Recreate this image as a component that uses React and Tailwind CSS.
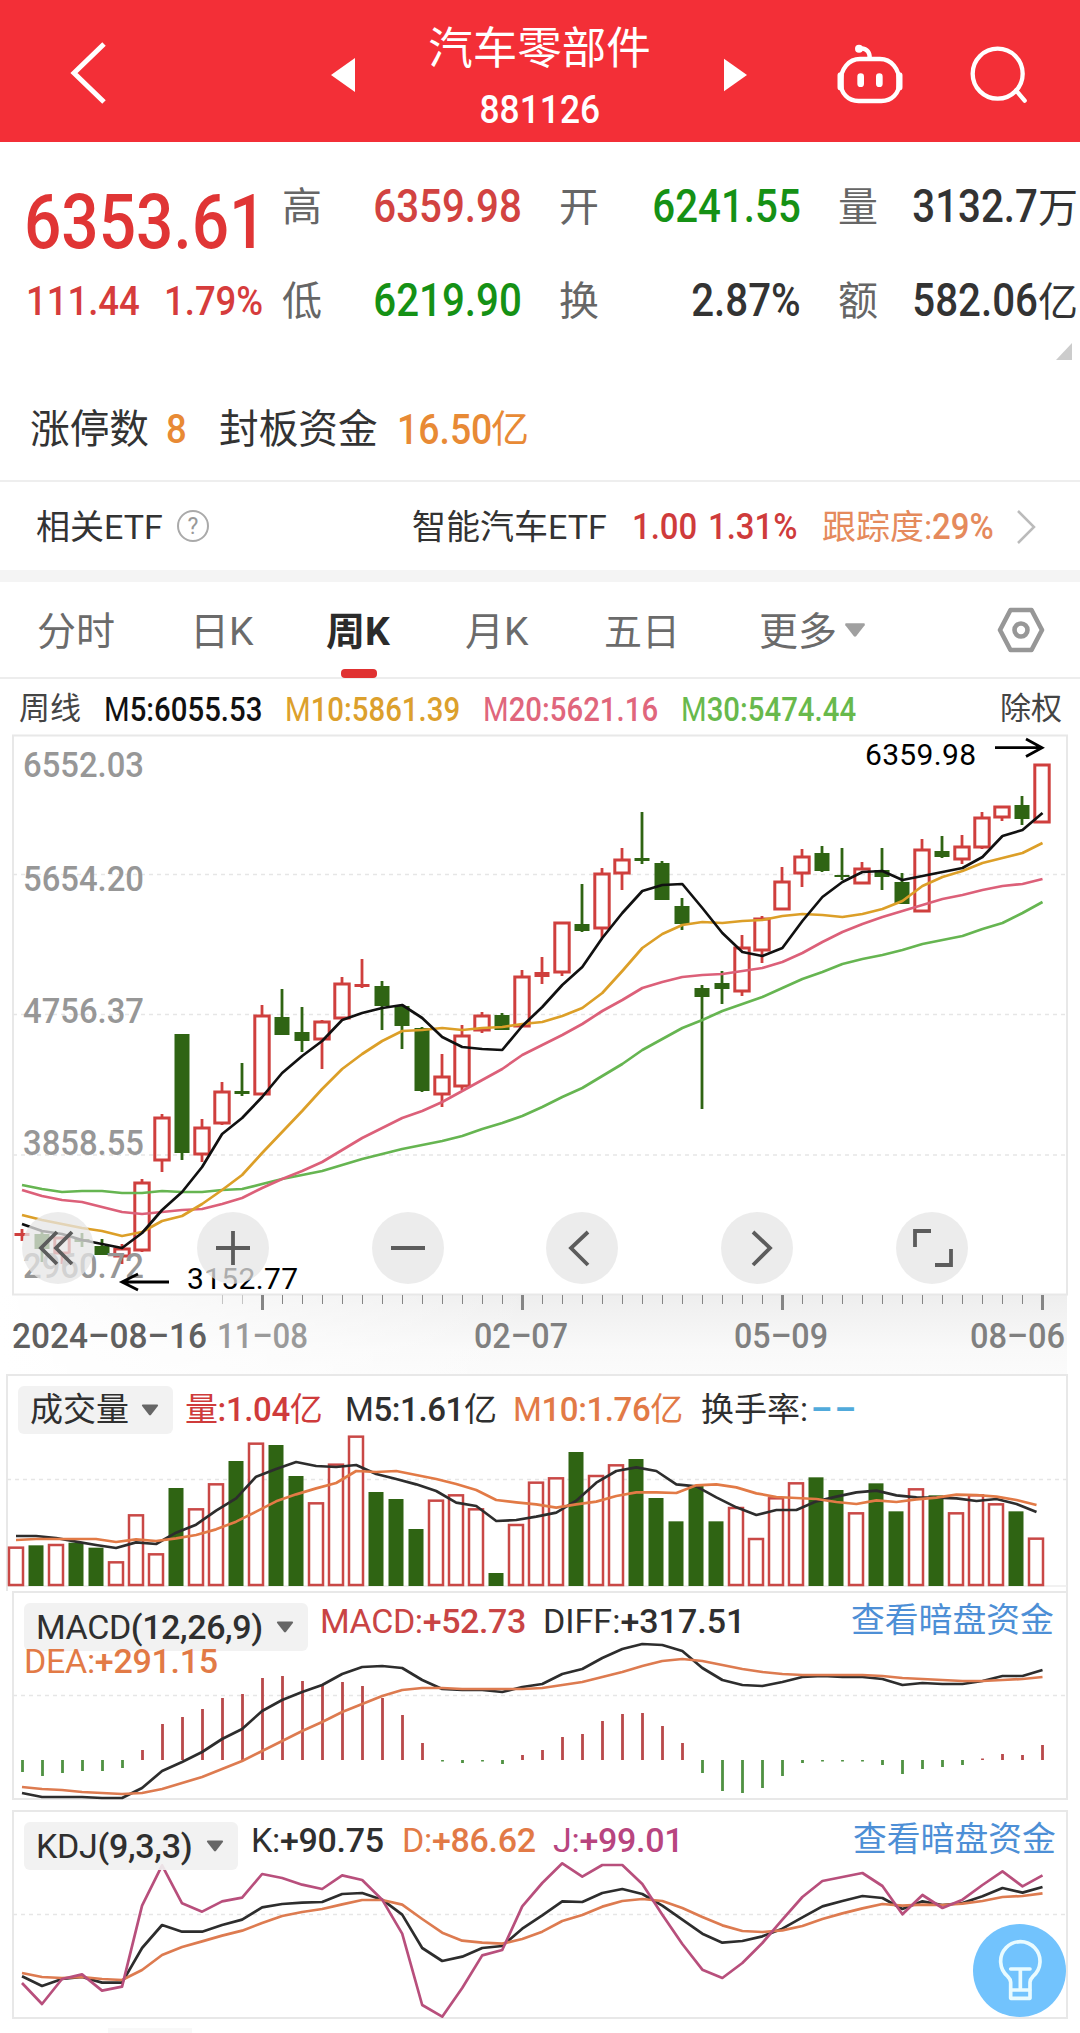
const RED = '#cf3f3d';
const GREEN = '#2f6413';

// one entry per week: [direction, body top, body bottom, wick top, wick bottom]
const candles = [
  ['r', 1233, 1236, 1229, 1241], ['g', 1234, 1249, 1232, 1262], ['r', 1238, 1253, 1238, 1264], ['g', 1239, 1242, 1233, 1247],
  ['g', 1246, 1255, 1239, 1255], ['r', 1249, 1256, 1244, 1264], ['r', 1183, 1250, 1179, 1252], ['r', 1118, 1160, 1114, 1172],
  ['g', 1034, 1153, 1034, 1160], ['r', 1128, 1154, 1119, 1162], ['r', 1092, 1123, 1082, 1125], ['g', 1091, 1094, 1063, 1096],
  ['r', 1016, 1094, 1005, 1094], ['g', 1017, 1035, 989, 1035], ['g', 1032, 1041, 1007, 1052], ['r', 1022, 1039, 1020, 1069],
  ['r', 984, 1018, 977, 1018], ['r', 984, 987, 959, 988], ['g', 986, 1006, 981, 1030], ['g', 1006, 1026, 1006, 1049],
  ['g', 1028, 1091, 1027, 1092], ['r', 1077, 1094, 1054, 1107], ['r', 1036, 1086, 1025, 1090], ['r', 1016, 1030, 1012, 1033],
  ['g', 1015, 1030, 1013, 1030], ['r', 977, 1026, 970, 1026], ['r', 972, 977, 957, 984], ['r', 923, 972, 923, 976],
  ['g', 924, 931, 884, 932], ['r', 874, 928, 868, 938], ['r', 860, 873, 848, 890], ['g', 858, 861, 812, 864],
  ['g', 863, 900, 861, 900], ['g', 906, 924, 898, 930], ['g', 988, 997, 985, 1109], ['g', 983, 989, 971, 1004],
  ['r', 948, 991, 935, 996], ['r', 919, 950, 916, 963], ['r', 882, 909, 867, 909], ['r', 857, 873, 849, 887],
  ['g', 853, 871, 846, 872], ['g', 875, 877, 848, 880], ['r', 869, 883, 862, 883], ['g', 870, 877, 848, 890],
  ['g', 882, 904, 873, 904], ['r', 850, 911, 839, 911], ['g', 851, 857, 836, 858], ['r', 847, 859, 835, 864],
  ['r', 818, 847, 812, 849], ['r', 807, 817, 807, 821], ['g', 805, 819, 796, 825], ['r', 765, 822, 765, 822],
];

const priceLines = [
  {
    color: '#66b551',
    y: [1185, 1189, 1192, 1191, 1191, 1193, 1193, 1191, 1192, 1192, 1190, 1189, 1184, 1179, 1175, 1171, 1165, 1159, 1154, 1149, 1145, 1141, 1136, 1129, 1123, 1116, 1107, 1097, 1088, 1076, 1064, 1050, 1039, 1028, 1020, 1011, 1004, 997, 988, 979, 972, 964, 959, 955, 950, 944, 940, 936, 929, 923, 913, 902],
  },
  {
    color: '#dc6079',
    y: [1190, 1196, 1200, 1202, 1207, 1212, 1214, 1212, 1210, 1209, 1204, 1198, 1188, 1179, 1171, 1162, 1150, 1138, 1128, 1118, 1111, 1102, 1091, 1080, 1069, 1055, 1045, 1035, 1024, 1011, 1000, 988, 982, 977, 975, 974, 971, 968, 962, 953, 942, 932, 924, 917, 911, 905, 899, 895, 890, 886, 884, 879],
  },
  {
    color: '#dc9f28',
    y: [1215, 1220, 1224, 1228, 1231, 1236, 1232, 1221, 1216, 1204, 1190, 1175, 1153, 1132, 1111, 1089, 1069, 1054, 1041, 1031, 1030, 1028, 1030, 1028, 1027, 1024, 1022, 1016, 1008, 993, 971, 948, 934, 925, 922, 923, 921, 920, 916, 914, 915, 917, 914, 909, 901, 886, 877, 871, 863, 858, 853, 843],
  },
  {
    color: '#111111',
    y: [1224, 1231, 1234, 1240, 1244, 1248, 1233, 1210, 1192, 1167, 1134, 1118, 1097, 1073, 1056, 1041, 1020, 1013, 1008, 1005, 1018, 1037, 1047, 1049, 1050, 1026, 1007, 985, 967, 938, 913, 891, 885, 884, 908, 933, 952, 956, 948, 921, 897, 882, 872, 871, 880, 876, 872, 868, 857, 836, 830, 813],
  },
];

const volumeDirs = 'rgrggrrrgrrgrggrrrgggrrrgrrrgrrgggggrrrrggrggrgrrrgr';
const volumeTops = [563, 556, 555, 548, 563, 607, 466, 583, 384, 448, 373, 303, 251, 255, 348, 430, 314, 230, 396, 417, 507, 422, 406, 448, 639, 495, 368, 355, 276, 348, 316, 297, 414, 484, 378, 484, 444, 537, 415, 370, 352, 390, 460, 370, 454, 388, 406, 460, 406, 433, 454, 536];
const volumeM5 = [528, 528, 534, 545, 555, 564, 547, 552, 518, 494, 452, 415, 350, 327, 306, 318, 321, 315, 342, 357, 373, 393, 428, 438, 483, 480, 470, 458, 422, 368, 333, 322, 333, 373, 379, 412, 442, 465, 450, 450, 424, 410, 397, 392, 406, 412, 413, 415, 423, 417, 432, 456];
const volumeM10 = [540, 537, 537, 537, 537, 546, 538, 543, 535, 525, 508, 485, 455, 424, 403, 385, 369, 333, 336, 333, 345, 357, 372, 390, 420, 427, 433, 443, 433, 425, 408, 397, 397, 399, 376, 373, 382, 400, 411, 414, 417, 426, 432, 421, 426, 418, 413, 404, 405, 410, 420, 435];

const macdEnds = [1772, 1776, 1773, 1771, 1771, 1768, 1750, 1724, 1717, 1709, 1698, 1694, 1678, 1676, 1681, 1685, 1682, 1686, 1698, 1715, 1743, 1761.5, 1763, 1761.5, 1764, 1755, 1750, 1737, 1734, 1721, 1714, 1713, 1726, 1743, 1773, 1791, 1793, 1788, 1776, 1763, 1761.5, 1761.5, 1761.5, 1765, 1774, 1769, 1767, 1765, 1758.5, 1754, 1755, 1745];
const diff = [1793, 1797, 1797, 1797, 1798, 1798, 1788, 1771, 1762, 1752, 1739, 1729, 1711, 1700, 1692, 1685, 1674, 1667, 1666, 1668, 1680, 1689, 1690, 1690, 1692, 1687, 1684, 1674, 1669, 1658, 1649, 1644, 1645, 1651, 1668, 1680, 1685, 1686, 1682, 1677, 1676, 1677, 1677, 1679, 1685, 1683, 1684, 1684, 1681, 1676, 1676, 1670];
const dea = [1787, 1789, 1790, 1792, 1793, 1794, 1793, 1789, 1783, 1777, 1769, 1761, 1751, 1741, 1731, 1722, 1712, 1704, 1696, 1690, 1688, 1688, 1689, 1689, 1689, 1689, 1688, 1685, 1682, 1677, 1672, 1666, 1661, 1659, 1661, 1665, 1669, 1672, 1674, 1675, 1675, 1675, 1675, 1676, 1678, 1679, 1680, 1681, 1681, 1680, 1679, 1677];

const kLine = [850, 879, 858, 852, 869, 869, 765, 696, 716, 716, 696, 680, 643, 633, 629, 627, 603, 600, 620, 665, 765, 804, 791, 765, 759, 707, 667, 625, 627, 600, 588, 603, 638, 680, 722, 749, 744, 730, 707, 673, 640, 624, 609, 615, 648, 625, 636, 630, 610, 585, 599, 582];
const dLine = [840, 852, 855, 852, 858, 861, 831, 786, 762, 745, 728, 713, 690, 669, 657, 648, 634, 621, 621, 635, 678, 719, 743, 749, 752, 738, 716, 684, 666, 641, 624, 618, 624, 645, 672, 697, 714, 717, 712, 699, 678, 661, 646, 633, 638, 635, 636, 632, 624, 612, 609, 601];
const jLine = [870, 933, 858, 844, 893, 881, 638, 517, 631, 656, 625, 614, 543, 555, 575, 588, 547, 561, 620, 722, 936, 971, 885, 787, 771, 640, 570, 511, 551, 516, 516, 573, 665, 753, 830, 855, 810, 750, 680, 612, 564, 552, 540, 579, 664, 606, 645, 620, 576, 535, 580, 547];

const thirds = (base) => (v) => base + v / 3;

function Line({ ys, color, x0 = 22 }) {
  const points = ys.map((y, i) => `${x0 + i * 20.01},${y}`).join(' ');
  return <polyline points={points} fill="none" stroke={color} strokeWidth="2.7" strokeLinejoin="round" />;
}

function Dashed({ y, x1 = 13 }) {
  return <line x1={x1} x2="1067" y1={y} y2={y} stroke="#e6e6e6" strokeWidth="1.5" strokeDasharray="4 4" />;
}

function Down({ className }) {
  return (
    <svg className={className} viewBox="0 0 18 12">
      <path d="M1.5 0.5h15q1 0.6 0.4 1.6l-7 9q-0.9 0.8-1.8 0l-7-9q-0.6-1 0.4-1.6z" fill="currentColor" />
    </svg>
  );
}

// narrow figures, squeezed towards the left edge
function Num({ children, className = '' }) {
  return <span className={`inline-block origin-left scale-x-[0.89] font-medium ${className}`}>{children}</span>;
}

function Header() {
  return (
    <header className="flex h-[142px] w-full items-center bg-[#f32f37] text-white">
      <svg className="mt-[4px] ml-[66px] h-[80px] w-[46px]" viewBox="66 33 46 80" fill="none" stroke="#fff" strokeWidth="5">
        <path d="M104 44L74 73l30 29" />
      </svg>
      <svg className="mt-[7px] ml-[219px] h-[34px] w-[24px]" viewBox="0 0 24 34" fill="#fff">
        <path d="M24 0v34L0 17z" />
      </svg>
      <div className="flex h-full w-[369px] flex-col items-center pt-[17px]">
        <div className="text-[44.5px] leading-[64px]">汽车零部件</div>
        <div className="mt-[9px] scale-x-[0.93] text-[38px] leading-[40px] font-medium">881126</div>
      </div>
      <svg className="mt-[7px] h-[34px] w-[23px]" viewBox="0 0 24 34" fill="#fff">
        <path d="M0 0v34l24-17z" />
      </svg>
      <svg className="mt-[8px] ml-[73px] h-[90px] w-[220px]" viewBox="0 0 660 270" fill="none" stroke="#fff" strokeWidth="13" strokeLinecap="round">
        <path d="M149 85C150 68 142 56 124 55" />
        <circle cx="117" cy="56" r="12" fill="#fff" stroke="none" />
        <path d="M120 87h60c34 0 58 30 58 68 0 36-22 58-54 58h-68c-32 0-54-22-54-58 0-38 24-68 58-68z" />
        <path d="M62 136v36M238 136v36" strokeWidth="19" />
        <path d="M122 140v21M178 140v21" strokeWidth="20" />
        <circle cx="533" cy="131" r="75" />
        <path d="M588 181l26 31" />
      </svg>
    </header>
  );
}

function Quote({ label, value, unit, labelClass, valueClass }) {
  return (
    <>
      <span className={`shrink-0 text-[40px] text-[#666] ${labelClass}`}>{label}</span>
      <span className={`shrink-0 text-right text-[45.5px] font-medium ${valueClass}`}>
        <span className="inline-block origin-right scale-x-[0.885]">{value}</span>
        {unit && <span className="text-[40px] font-normal">{unit}</span>}
      </span>
    </>
  );
}

function Summary() {
  return (
    <section className="h-[428px] overflow-hidden">
      <div className="flex h-[94px] items-center pt-[37px] whitespace-nowrap">
        <span className="ml-[24px] w-[258px] shrink-0 pt-[28px] text-[76px] leading-none text-[#e03535]">
          <span className="inline-block origin-left scale-x-[0.865] font-medium">6353.61</span>
        </span>
        <Quote label="高" value="6359.98" labelClass="w-[40px]" valueClass="w-[200px] text-[#d24341]" />
        <Quote label="开" value="6241.55" labelClass="ml-[37px] w-[40px]" valueClass="w-[202px] text-[#159115]" />
        <Quote label="量" value="3132.7" unit="万" labelClass="ml-[37px] w-[40px]" valueClass="w-[200px] text-[#333]" />
      </div>
      <div className="flex h-[94px] items-center pt-[37px] whitespace-nowrap">
        <span className="ml-[26px] w-[138px] shrink-0 text-[41px] text-[#d63c3c]"><Num className="scale-x-[0.87]">111.44</Num></span>
        <span className="w-[118px] shrink-0 text-[41px] text-[#d63c3c]"><Num>1.79%</Num></span>
        <Quote label="低" value="6219.90" labelClass="w-[40px]" valueClass="w-[200px] text-[#159115]" />
        <Quote label="换" value="2.87%" labelClass="ml-[37px] w-[40px]" valueClass="w-[202px] text-[#333]" />
        <Quote label="额" value="582.06" unit="亿" labelClass="ml-[37px] w-[40px]" valueClass="w-[200px] text-[#333]" />
      </div>
      <div className="flex h-[30px] items-end justify-end pr-[8px]">
        <svg className="h-[17px] w-[16px]" viewBox="0 0 16 17">
          <path d="M16 0v17H0z" fill="#ccc" />
        </svg>
      </div>
      <div className="flex h-[122px] items-center border-b-2 border-[#eee] pt-[19px] text-[39.7px] whitespace-nowrap text-[#333]">
        <span className="ml-[30px] w-[136px]">涨停数</span>
        <span className="w-[53px] text-[41px] text-[#e88a35]"><Num>8</Num></span>
        <span className="w-[178px]">封板资金</span>
        <span className="w-[94px] text-[42px] text-[#e88a35]"><Num>16.50</Num></span>
        <span className="text-[38px] text-[#e88a35]">亿</span>
      </div>
      <div className="flex h-[88px] items-center pt-[2px] text-[34px] whitespace-nowrap text-[#333]">
        <span className="ml-[36px] w-[141px]">相关ETF</span>
        <span className="-mt-[2px] flex h-[32px] w-[32px] items-center justify-center rounded-full border-2 border-[#aaa] text-[23px] leading-none text-[#999]">?</span>
        <span className="ml-[203px] w-[220px]">智能汽车ETF</span>
        <span className="w-[76px] text-[37px] text-[#cf3b3b]"><Num>1.00</Num></span>
        <span className="w-[114px] text-[37px] text-[#cf3b3b]"><Num>1.31%</Num></span>
        <span className="w-[110px] text-[#e58a5c]">跟踪度:</span>
        <span className="w-[84px] text-[37px] text-[#e58a5c]"><Num>29%</Num></span>
        <svg className="h-[34px] w-[20px]" viewBox="0 0 20 34" fill="none" stroke="#bbb" strokeWidth="2.5">
          <path d="M2 1l16 16L2 33" />
        </svg>
      </div>
    </section>
  );
}

function Tabs() {
  return (
    <nav className="flex h-[97px] items-center border-b-2 border-[#ededed] pt-[5px] text-[39px] whitespace-nowrap text-[#6b6b6b]">
      <span className="ml-[37px] w-[153px]">分时</span>
      <span className="w-[136px]">日K</span>
      <span className="relative w-[139px] font-bold text-[#2b2b2b]">
        周K
        <i className="absolute top-[66px] left-[15px] h-[9px] w-[36px] rounded bg-[#e03131]" />
      </span>
      <span className="w-[139px]">月K</span>
      <span className="w-[155px] text-[38px]">五日</span>
      <span className="w-[85px]">更多</span>
      <Down className="-mt-[5px] h-[18px] w-[22px] text-[#a0a0a0]" />
      <svg className="-mt-[5px] ml-[131px] h-[46px] w-[48px]" viewBox="0 0 48 46" fill="none" stroke="#979797" strokeWidth="4.6" strokeLinejoin="round">
        <path d="M13.5 3h21L45 23 34.5 43h-21L3 23z" />
        <circle cx="24" cy="23" r="6.5" />
      </svg>
    </nav>
  );
}

function Legend() {
  return (
    <div className="flex h-[55px] items-center pt-[6px] text-[33px] whitespace-nowrap">
      <span className="ml-[19px] w-[85px] text-[31px] text-[#444]">周线</span>
      <span className="w-[181px] text-[#111]"><Num><span className="font-normal">M</span>5:6055.53</Num></span>
      <span className="w-[198px] text-[#dca02c]"><Num><span className="font-normal">M</span>10:5861.39</Num></span>
      <span className="w-[198px] text-[#e0667c]"><Num><span className="font-normal">M</span>20:5621.16</Num></span>
      <span className="w-[319px] text-[#68b94c]"><Num><span className="font-normal">M</span>30:5474.44</Num></span>
      <span className="text-[31px] text-[#444]">除权</span>
    </div>
  );
}

function Candle({ data, i }) {
  const [dir, top, bottom, high, low] = data;
  const x = 22 + i * 20;
  const color = dir === 'r' ? RED : GREEN;
  const flat = bottom - top < 6;
  return (
    <g fill={color}>
      <rect x={x - 1.4} y={high} width="2.8" height={Math.max(top - high, 0)} />
      <rect x={x - 1.4} y={bottom} width="2.8" height={Math.max(low - bottom, 0)} />
      {dir === 'g' || flat ? (
        <rect x={x - 7.5} y={top} width="15" height={bottom - top} />
      ) : (
        <rect x={x - 7.2} y={top} width="14.4" height={bottom - top} fill="none" stroke={color} strokeWidth="3" />
      )}
    </g>
  );
}

const roundIcons = [
  ['first', 'M35 20L19 36l16 16M50 20L34 36l16 16'],
  ['zoom in', 'M36 19v34M19 36h34'],
  ['zoom out', 'M19 36h34'],
  ['previous', 'M42 20L25 36l17 17'],
  ['next', 'M32 20l17 16-17 17'],
  ['full screen', 'M19 35V19h16M39 53h16V37'],
];

const axisPrices = [['6552.03', 777], ['5654.20', 891], ['4756.37', 1023], ['3858.55', 1155], ['2960.72', 1278]];
const axisDates = [['11–08', 218, '#9a9a9a', 91], ['02–07', 475, '#808080', 94], ['05–09', 735, '#808080', 94], ['08–06', 971, '#808080', 95]];

function PriceChart() {
  return (
    <div className="relative h-[640px]">
      <svg className="block h-[640px] w-full" viewBox="0 734 1080 640">
        <defs>
          <linearGradient id="axisX" x1="0" x2="1">
            <stop offset="0" stopColor="#fff" />
            <stop offset="0.5" stopColor="#fff" stopOpacity="0" />
          </linearGradient>
          <linearGradient id="axisY" x1="0" x2="0" y1="0" y2="1">
            <stop offset="0" stopColor="#eeeeee" />
            <stop offset="0.7" stopColor="#f9f9f9" />
            <stop offset="1" stopColor="#fbfbfb" />
          </linearGradient>
        </defs>
        <rect x="0" y="1295" width="1067" height="79" fill="url(#axisY)" />
        <rect x="0" y="1295" width="1067" height="79" fill="url(#axisX)" />
        <rect x="13" y="735.5" width="1054" height="559" fill="#fff" stroke="#e8e8e8" strokeWidth="2" />
        <Dashed y={874.5} />
        <Dashed y={1014.5} />
        <Dashed y={1155} />
        {candles.map((c, i) => (
          <Candle key={i} data={c} i={i} />
        ))}
        {priceLines.map((l) => (
          <Line key={l.color} ys={l.y} color={l.color} />
        ))}
        {axisPrices.map(([label, y]) => (
          <text key={label} x="23" y={y} textLength="121" lengthAdjust="spacingAndGlyphs" fontSize="35" fontWeight="500" fill="#979797">
            {label}
          </text>
        ))}
        <text x="865" y="765" textLength="111" fontSize="30" fill="#000">6359.98</text>
        <path d="M995 747.7h46M1026 739l16 8.7-16 8.7" fill="none" stroke="#000" strokeWidth="2.8" />
        <text x="187" y="1289" textLength="111" fontSize="30" fill="#000">3152.77</text>
        <path d="M169 1282h-46M138 1274l-16 8 16 8" fill="none" stroke="#000" strokeWidth="2.8" />
        {Array.from({ length: 42 }, (_, k) => k + 10).map((i) => {
          const major = (i - 12) % 13 === 0;
          return (
            <rect
              key={i}
              x={22.5 + i * 20 - (major ? 1.5 : 0.5)}
              y="1295"
              width={major ? 3 : 1}
              height={major ? 15 : 9}
              fill={i < 12 ? '#c4c4c4' : '#858585'}
            />
          );
        })}
        <text x="12" y="1348" textLength="195" lengthAdjust="spacingAndGlyphs" fontSize="35" fontWeight="500" fill="#606060">2024–08–16</text>
        {axisDates.map(([label, x, color, length]) => (
          <text key={label} x={x - 1} y="1348" textLength={length} lengthAdjust="spacingAndGlyphs" fontSize="35" fontWeight="500" fill={color}>
            {label}
          </text>
        ))}
      </svg>
      <div className="absolute top-[478px] left-[22px] flex gap-[102.8px]">
        {roundIcons.map(([name, d]) => (
          <button key={name} aria-label={name} className="h-[72px] w-[72px] shrink-0 rounded-full bg-[#e5e5e5]/75">
            <svg className="h-full w-full" viewBox="0 0 72 72" fill="none" stroke="#5c5c5c" strokeWidth="3.8">
              <path d={d} />
            </svg>
          </button>
        ))}
      </div>
    </div>
  );
}

function Pill({ children, className }) {
  return (
    <div className={`flex h-[48px] shrink-0 items-center justify-between rounded-md bg-[#f1f1f1]/90 text-[#2f2f2f] ${className}`}>
      {children}
      <Down className="h-[12px] w-[18px] text-[#666]" />
    </div>
  );
}

function VolumeChart() {
  const at = thirds(1360);
  return (
    <div className="relative h-[217px]">
      <svg className="block h-[217px] w-full" viewBox="0 1374 1080 217">
        <path d="M7 1591V1375H1067V1591" fill="none" stroke="#e8e8e8" strokeWidth="2" />
        <path d="M7 1586H1067" stroke="#ececec" strokeWidth="1.5" />
        <Dashed y={1479.5} x1={7} />
        {volumeTops.map((v, i) => {
          const x = 16 + i * 20;
          const top = at(v);
          return volumeDirs[i] === 'g' ? (
            <rect key={i} x={x - 7.5} y={top} width="15" height={1586 - top} fill={GREEN} />
          ) : (
            <rect key={i} x={x - 7} y={top} width="14" height={1585 - top} fill="#fff" stroke="#c94846" strokeWidth="2.5" />
          );
        })}
        <Line ys={volumeM5.map(at)} color="#2d2d2d" x0={16} />
        <Line ys={volumeM10.map(at)} color="#e27a46" x0={16} />
      </svg>
      <div className="absolute top-[11px] left-[18px] flex items-center text-[33px] tracking-[-0.4px] whitespace-nowrap">
        <Pill className="mr-[12px] w-[155px] pr-[14px] pl-[12px] tracking-normal">成交量</Pill>
        <span className="w-[160px] font-medium text-[#cf3b3b]">
          <span className="font-normal">量</span>:1.04<span className="font-normal">亿</span>
        </span>
        <span className="w-[168px] font-medium text-[#2f2f2f]">
          <span className="font-normal">M</span>5:1.61<span className="font-normal">亿</span>
        </span>
        <span className="w-[188px] font-medium text-[#e27a46]">
          <span className="font-normal">M</span>10:1.76<span className="font-normal">亿</span>
        </span>
        <span className="tracking-normal text-[#2f2f2f]">换手率:</span>
        <span className="ml-[3px] font-bold tracking-[3px] text-[#51aadb]">––</span>
      </div>
    </div>
  );
}

function MacdChart() {
  return (
    <div className="relative h-[209px]">
      <svg className="block h-[209px] w-full" viewBox="0 1591 1080 209">
        <rect x="13" y="1592" width="1054" height="207" fill="#fff" stroke="#e8e8e8" strokeWidth="2" />
        <Dashed y={1695.5} />
        {macdEnds.map((end, i) => (
          <rect
            key={i}
            x={22.5 + i * 20 - 1.4}
            y={Math.min(end, 1760)}
            width="2.8"
            height={Math.abs(end - 1760)}
            fill={end < 1760 ? '#b9494a' : '#4f9142'}
          />
        ))}
        <Line ys={diff} color="#2d2d2d" />
        <Line ys={dea} color="#dd7b50" />
      </svg>
      <div className="absolute top-[12px] left-[24px] flex items-center text-[34px] tracking-[-0.4px] whitespace-nowrap">
        <Pill className="w-[284px] pr-[14px] pl-[12px]">
          <span>MACD<span className="font-medium">(12,26,9)</span></span>
        </Pill>
        <span className="-mt-[12px] ml-[12px] w-[223px] text-[#c94444]">MACD:<span className="font-medium">+52.73</span></span>
        <span className="-mt-[12px] w-[308px] tracking-normal text-[#2f2f2f]">DIFF:<span className="font-medium">+317.51</span></span>
        <span className="-mt-[11px] text-[33.8px] tracking-normal text-[#4d8fd6]">查看暗盘资金</span>
      </div>
      <div className="absolute top-[45px] left-[24px] text-[34px] tracking-[-0.3px] text-[#e27a46]">DEA:<span className="font-medium">+291.15</span></div>
    </div>
  );
}

function KdjChart() {
  const at = thirds(1693);
  return (
    <div className="relative mt-[10px] h-[223px]">
      <svg className="block h-[223px] w-full" viewBox="0 1810 1080 223">
        <rect x="13" y="1811" width="1054" height="207" fill="#fff" stroke="#e8e8e8" strokeWidth="2" />
        <rect x="108" y="2028" width="84" height="5" fill="#f8f8f8" />
        <Dashed y={1914.5} />
        <Line ys={kLine.map(at)} color="#2d2d2d" />
        <Line ys={dLine.map(at)} color="#dd7b50" />
        <Line ys={jLine.map(at)} color="#b84f7c" />
      </svg>
      <div className="absolute top-[12px] left-[24px] flex items-center text-[34px] tracking-[-0.3px] whitespace-nowrap">
        <Pill className="w-[214px] pr-[14px] pl-[12px]">
          <span>KDJ<span className="font-medium">(9,3,3)</span></span>
        </Pill>
        <span className="-mt-[12px] ml-[13px] w-[151px] text-[#2f2f2f]">K:<span className="font-medium">+90.75</span></span>
        <span className="-mt-[12px] w-[151px] text-[#e27a46]">D:<span className="font-medium">+86.62</span></span>
        <span className="-mt-[12px] w-[300px] text-[#b8457f]">J:<span className="font-medium">+99.01</span></span>
        <span className="-mt-[11px] text-[33.8px] tracking-normal text-[#4d8fd6]">查看暗盘资金</span>
      </div>
      <button aria-label="tips" className="absolute top-[114px] left-[973px] h-[93px] w-[93px] rounded-full bg-[#72c3fd]">
        <svg className="h-full w-full" viewBox="39 27 279 279" fill="none" stroke="#e9fbff" strokeWidth="11" strokeLinejoin="round" strokeLinecap="round">
          <path d="M152 250v-48c0-8-3-12-9-18a59 59 0 1 1 76 0c-6 6-9 10-9 18v48z" />
          <path d="M152 162h58M181 164v60M153 225h56" />
        </svg>
      </button>
    </div>
  );
}

function App() {
  return (
    <div className="h-[2033px] w-[1080px] overflow-hidden bg-white font-[Roboto,'Noto_Sans_CJK_SC',sans-serif]">
      <Header />
      <Summary />
      <div className="h-[12px] bg-[#f4f4f4]" />
      <Tabs />
      <Legend />
      <PriceChart />
      <VolumeChart />
      <MacdChart />
      <KdjChart />
    </div>
  );
}

export default App;
